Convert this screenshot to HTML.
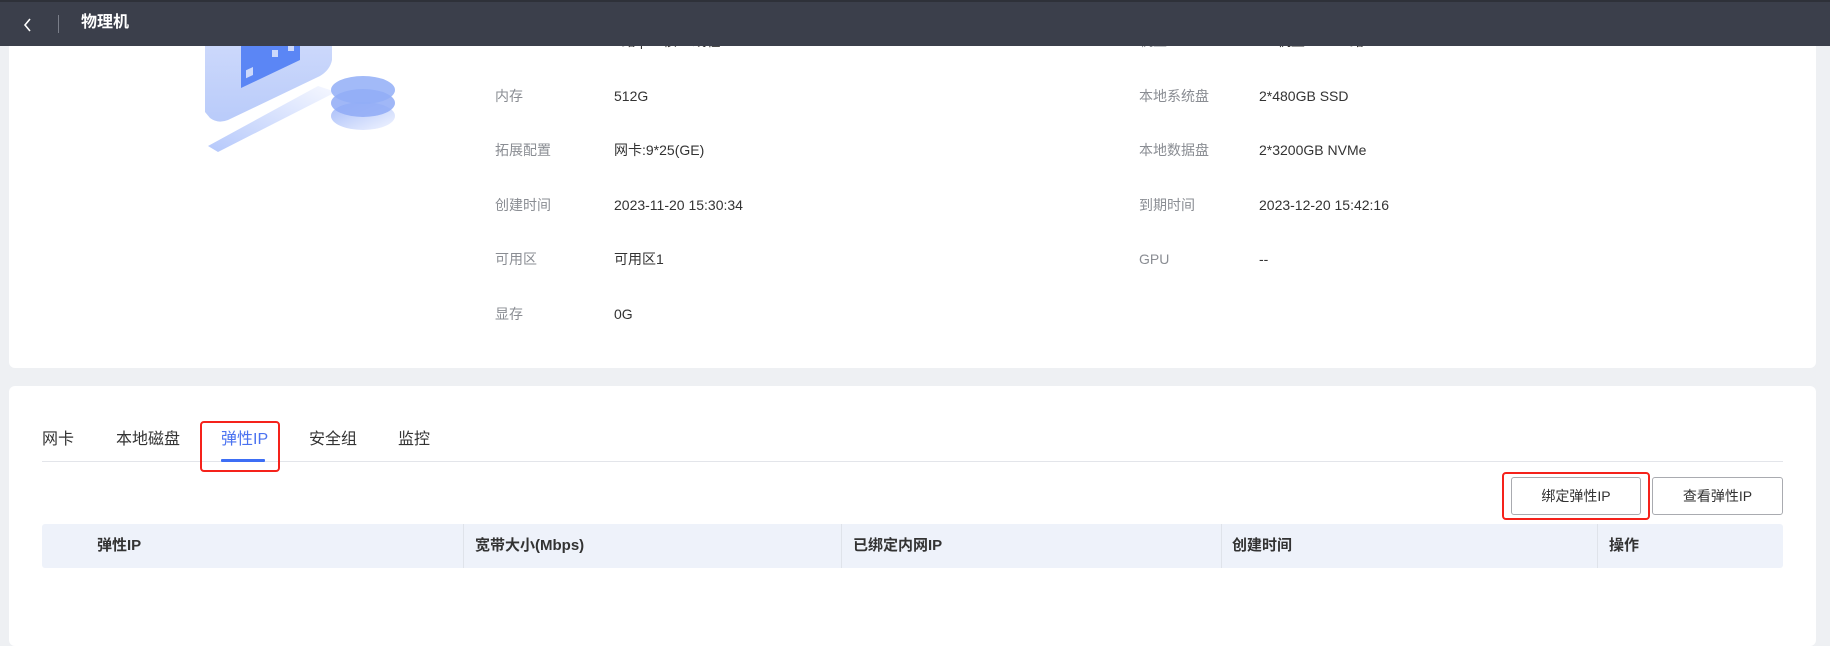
<!DOCTYPE html>
<html><head><meta charset="utf-8"><style>
*{margin:0;padding:0;box-sizing:border-box}
body{width:1830px;height:628px;overflow:hidden;background:#eef0f3;font-family:"Liberation Sans","Noto Sans CJK SC",sans-serif;position:relative}
.abs{position:absolute}
.nav{left:0;top:0;width:1830px;height:46px;background:#3b3f4b;border-top:2px solid #2e3139}
.card{background:#fff;border-radius:6px}
.lab{color:#8a8d93;font-size:14px;line-height:18px}
.val{color:#333;font-size:14px;line-height:18px}
.tab{font-size:16px;color:#333;top:430px;line-height:20px}
.th{font-size:15px;font-weight:bold;color:#333;top:537px;line-height:18px}
.btn{border:1px solid #a9abb0;border-radius:3px;background:#fff;font-size:14px;color:#333;text-align:center;line-height:36px;height:38px;top:477px}
.red{border:2px solid #f5221b;border-radius:4px}
.vd{width:1px;background:#dfe3ea;top:524px;height:44px}
</style></head><body>
<div class="abs card" style="left:9px;top:30px;width:1807px;height:338px"></div>
<div class="abs card" style="left:9px;top:386px;width:1807px;height:260px"></div>

<svg class="abs" style="left:195px;top:20px" width="220" height="140" viewBox="195 20 220 140">
<defs>
<linearGradient id="g1" x1="0" y1="0" x2="0" y2="1"><stop offset="0" stop-color="#cdd9fb"/><stop offset="1" stop-color="#b9cbfa"/></linearGradient>
<linearGradient id="g2" x1="0" y1="1" x2="1" y2="0"><stop offset="0" stop-color="#b5c8fb"/><stop offset="1" stop-color="#f6f8ff"/></linearGradient>
<linearGradient id="g3" x1="0" y1="0" x2="1" y2="1"><stop offset="0" stop-color="#8eaaf7"/><stop offset="1" stop-color="#eef2ff"/></linearGradient>
</defs>
<path d="M205 40 L332 40 L332 60 Q330 70 320 76 L228 120 Q218 124 210 118 L205 112 Z" fill="url(#g1)"/>
<path d="M241 40 L300 40 L300 60 L241 88 Z" fill="#5b86f5"/>
<rect x="246" y="70" width="7" height="8" fill="#cdd9fb" transform="skewY(-25) translate(0,115)"/>
<rect x="272" y="50" width="6" height="7" fill="#cdd9fb"/>
<rect x="288" y="44" width="6" height="7" fill="#cdd9fb"/>
<path d="M208 146 L318 86 L336 92 L218 152 Z" fill="url(#g2)"/>
<ellipse cx="363" cy="116" rx="32" ry="14" fill="url(#g3)" opacity=".8"/>
<ellipse cx="363" cy="103" rx="32" ry="14" fill="#8faaf6" opacity=".85"/>
<ellipse cx="363" cy="90" rx="32" ry="14" fill="#92aef7" opacity=".85"/>
</svg>

<div class="abs lab" style="left:495px;top:32px">CPU</div><div class="abs val" style="left:614px;top:32px">2路 | 28核56线程</div>
<div class="abs lab" style="left:1139px;top:32px">机型</div><div class="abs val" style="left:1259px;top:32px">3U机型 HG3-2路</div>
<div class="abs lab" style="left:495px;top:87px">内存</div><div class="abs val" style="left:614px;top:87px">512G</div>
<div class="abs lab" style="left:1139px;top:87px">本地系统盘</div><div class="abs val" style="left:1259px;top:87px">2*480GB SSD</div>
<div class="abs lab" style="left:495px;top:141px">拓展配置</div><div class="abs val" style="left:614px;top:141px">网卡:9*25(GE)</div>
<div class="abs lab" style="left:1139px;top:141px">本地数据盘</div><div class="abs val" style="left:1259px;top:141px">2*3200GB NVMe</div>
<div class="abs lab" style="left:495px;top:196px">创建时间</div><div class="abs val" style="left:614px;top:196px">2023-11-20 15:30:34</div>
<div class="abs lab" style="left:1139px;top:196px">到期时间</div><div class="abs val" style="left:1259px;top:196px">2023-12-20 15:42:16</div>
<div class="abs lab" style="left:495px;top:250px">可用区</div><div class="abs val" style="left:614px;top:250px">可用区1</div>
<div class="abs lab" style="left:1139px;top:250px">GPU</div><div class="abs val" style="left:1259px;top:250px">--</div>
<div class="abs lab" style="left:495px;top:305px">显存</div><div class="abs val" style="left:614px;top:305px">0G</div>

<div class="abs nav">
<svg class="abs" style="left:22px;top:15px" width="12" height="16"><path d="M8 2 L3 8 L8 14" stroke="#fff" stroke-width="1.6" fill="none"/></svg>
<div class="abs" style="left:58px;top:13px;width:1px;height:18px;background:#7a7e89"></div>
<div class="abs" style="left:81px;top:10px;color:#fff;font-size:16px;font-weight:bold;line-height:22px">物理机</div>
</div>

<div class="abs tab" style="left:42px">网卡</div>
<div class="abs tab" style="left:116px">本地磁盘</div>
<div class="abs tab" style="left:221px;color:#4a72f0">弹性IP</div>
<div class="abs tab" style="left:309px">安全组</div>
<div class="abs tab" style="left:398px">监控</div>
<div class="abs" style="left:42px;top:461px;width:1741px;height:1px;background:#e3e5ea"></div>
<div class="abs" style="left:221px;top:459px;width:44px;height:3px;background:#3d6ef5;border-radius:1px"></div>
<div class="abs red" style="left:200px;top:421px;width:80px;height:51px"></div>

<div class="abs btn" style="left:1511px;width:130px">绑定弹性IP</div>
<div class="abs btn" style="left:1652px;width:131px">查看弹性IP</div>
<div class="abs red" style="left:1502px;top:472px;width:148px;height:48px"></div>

<div class="abs" style="left:42px;top:524px;width:1741px;height:44px;background:#eef2fa;border-radius:3px"></div>
<div class="abs vd" style="left:463px"></div>
<div class="abs vd" style="left:841px"></div>
<div class="abs vd" style="left:1221px"></div>
<div class="abs vd" style="left:1597px"></div>
<div class="abs th" style="left:97px">弹性IP</div>
<div class="abs th" style="left:475px">宽带大小(Mbps)</div>
<div class="abs th" style="left:853px">已绑定内网IP</div>
<div class="abs th" style="left:1232px">创建时间</div>
<div class="abs th" style="left:1609px">操作</div>
</body></html>
